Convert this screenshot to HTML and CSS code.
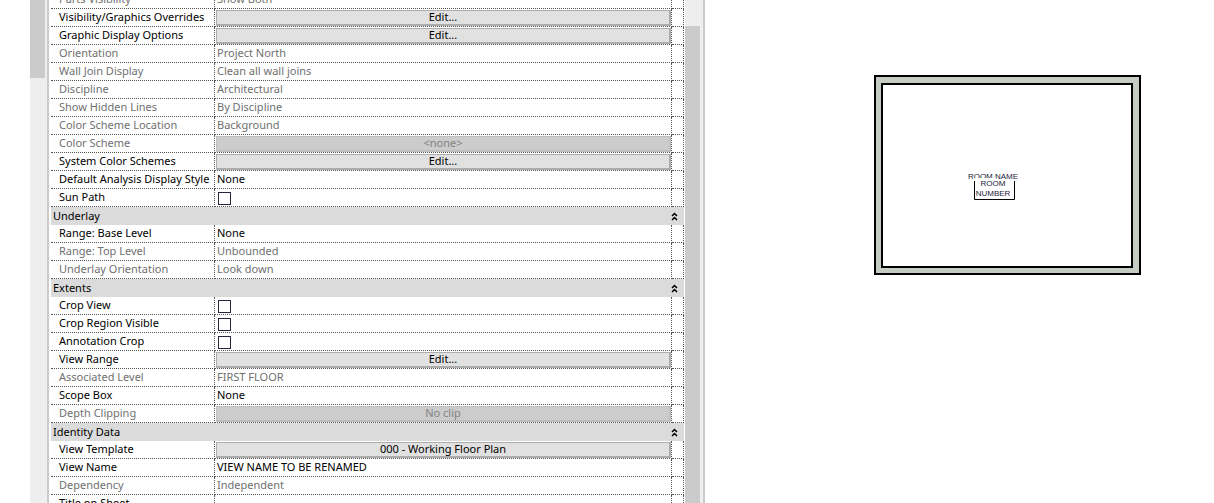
FILE: index.html
```html
<!DOCTYPE html>
<html lang="en">
<head>
<meta charset="utf-8">
<title>View Properties</title>
<link rel="stylesheet" href="styles.css">
<script src="app.js" defer></script>
</head>
<body>
<main class="workspace">
  <aside class="dock">
    <div class="scroll scroll-left"><div class="thumb thumb-left"></div></div>
    <section class="panel" aria-label="Properties">
      <table class="props">
        <colgroup><col class="col-name"><col><col class="col-link"></colgroup>
        <tbody id="rows"></tbody>
      </table>
      <div class="scroll scroll-right"><div class="thumb thumb-right"></div></div>
    </section>
  </aside>
  <section class="canvas" aria-label="Floor plan">
    <svg class="plan" width="267" height="200" viewBox="0 0 267 200">
      <path class="ink" d="M0 0H267V200H0Z"/>
      <path class="wall" d="M2 2H265V198H2Z"/>
      <path class="ink" d="M7 8H259V193H7Z"/>
      <path class="paper" d="M9 10H257V191H9Z"/>
      <text class="tag" x="119" y="104">ROOM NAME</text>
      <path class="paper" d="M101 103H122V105H101Z"/>
      <path class="frame" d="M100.500 106V124.500H140.500V106"/>
      <text class="tag" x="119" y="111">ROOM</text>
      <text class="tag" x="119" y="121">NUMBER</text>
    </svg>
  </section>
</main>
</body>
</html>
```
FILE: styles.css
```css
* { box-sizing: border-box; }

body {
  margin: 0;
  background: #fff;
  color: #000;
  font: 11px/15px "Noto Sans", "Open Sans", sans-serif;
}

.workspace {
  display: grid;
  grid-template-columns: 705fr 509fr;
  height: 100vh;
  overflow: hidden;
}

.dock {
  display: flex;
  min-width: 0;
  padding-left: 30px;
  overflow: hidden;
}

.scroll {
  flex: none;
  background: #eee;
}

.scroll-left { width: 17px; }
.scroll-right { width: 18px; }

.thumb {
  width: 15px;
  background: #cbcbcb;
}

.thumb-left { height: 78px; }
.thumb-right { height: 100%; margin-top: 26px; }

.panel {
  display: flex;
  flex: 1;
  min-width: 0;
  border-left: 2px solid #cbcbcb;
  border-right: 2px solid #cbcbcb;
  padding-left: 2px;
}

.props {
  flex: 1;
  align-self: flex-start;
  width: 100%;
  min-width: 0;
  margin: -9px 1px 0 0;
  table-layout: fixed;
  border-spacing: 0;
}

.col-name { width: 164px; }
.col-link { width: 12px; }

.props th,
.props td {
  height: 18px;
  padding: 0;
  border-right: 1px dotted #555;
  border-bottom: 1px dotted #555;
  font-weight: 400;
  text-align: left;
  white-space: nowrap;
  vertical-align: top;
}

.props .name { padding-left: 8px; }
.props .value { padding-left: 2px; }
.props .has-button { padding: 1px 0 0 1px; }
.props .dim { color: #707070; }

.props .group {
  padding: 0 6px 0 2px;
  border: 0;
  background: #dbdbdb;
  line-height: 18px;
}

.group-bar {
  display: flex;
  align-items: center;
  justify-content: space-between;
}

.toggle {
  display: flex;
  padding: 0;
  border: 0;
  background: none;
}

.toggle svg {
  display: block;
  fill: none;
  stroke: #000;
  stroke-width: 1.5;
}

.edit {
  display: block;
  width: 100%;
  height: 16px;
  padding: 0 0 1px;
  border: solid #adadad;
  border-width: 1px 2px 2px 1px;
  background: #e1e1e1;
  color: #000;
  font: inherit;
  line-height: 12px;
}

.edit:disabled {
  border-color: #bfbfbf;
  background: #ccc;
  color: #838383;
}

.check {
  display: block;
  appearance: none;
  width: 13px;
  height: 13px;
  margin: 3px 0 0 1px;
  border: 1px solid #25253d;
  background: #fff;
}

.canvas {
  min-width: 0;
  padding: 75px 0 0 169px;
}

.plan { display: block; }
.ink { fill: #000; }
.wall { fill: #c6cbc3; }
.paper { fill: #fff; }
.frame { fill: none; stroke: #000; }

.tag {
  fill: #222238;
  font: 8px "Liberation Sans", Arial, sans-serif;
  text-anchor: middle;
}
```
FILE: app.js
```js
const rows = [
  ["dim", "Parts Visibility", "Show Both"],
  ["button", "Visibility/Graphics Overrides", "Edit..."],
  ["button", "Graphic Display Options", "Edit..."],
  ["dim", "Orientation", "Project North"],
  ["dim", "Wall Join Display", "Clean all wall joins"],
  ["dim", "Discipline", "Architectural"],
  ["dim", "Show Hidden Lines", "By Discipline"],
  ["dim", "Color Scheme Location", "Background"],
  ["disabled", "Color Scheme", "<none>"],
  ["button", "System Color Schemes", "Edit..."],
  ["text", "Default Analysis Display Style", "None"],
  ["check", "Sun Path"],
  ["group", "Underlay"],
  ["text", "Range: Base Level", "None"],
  ["dim", "Range: Top Level", "Unbounded"],
  ["dim", "Underlay Orientation", "Look down"],
  ["group", "Extents"],
  ["check", "Crop View"],
  ["check", "Crop Region Visible"],
  ["check", "Annotation Crop"],
  ["button", "View Range", "Edit..."],
  ["dim", "Associated Level", "FIRST FLOOR"],
  ["text", "Scope Box", "None"],
  ["disabled", "Depth Clipping", "No clip"],
  ["group", "Identity Data"],
  ["button", "View Template", "000 - Working Floor Plan"],
  ["text", "View Name", "VIEW NAME TO BE RENAMED"],
  ["dim", "Dependency", "Independent"],
  ["text", "Title on Sheet", ""]
];

const escapeText = (s) => s.replace(/</g, "&lt;").replace(/>/g, "&gt;");

function renderRow([kind, name, value = ""], i) {
  if (kind === "group") {
    return `<tr><th class="group" colspan="3"><div class="group-bar">${name}
      <button class="toggle" aria-label="Collapse ${name}"><svg width="7" height="9" viewBox="0 0 7 9"><path d="M1 4L3.500 1.500L6 4M1 8L3.500 5.500L6 8"/></svg></button>
      </div></th></tr>`;
  }
  const id = `prop-${i}`;
  const dim = kind === "dim" || kind === "disabled" ? " dim" : "";
  const isButton = kind === "button" || kind === "disabled";
  let cell = escapeText(value);
  let label = name;
  if (isButton) {
    cell = `<button class="edit" aria-describedby="${id}"${kind === "disabled" ? " disabled" : ""}>${cell}</button>`;
  } else if (kind === "check") {
    cell = `<input class="check" type="checkbox" id="${id}-box">`;
    label = `<label for="${id}-box">${name}</label>`;
  }
  return `<tr><th class="name${dim}" id="${id}" scope="row">${label}</th>
    <td class="${isButton ? "has-button" : "value"}${dim}">${cell}</td><td></td></tr>`;
}

document.getElementById("rows").innerHTML = rows.map(renderRow).join("");
```
